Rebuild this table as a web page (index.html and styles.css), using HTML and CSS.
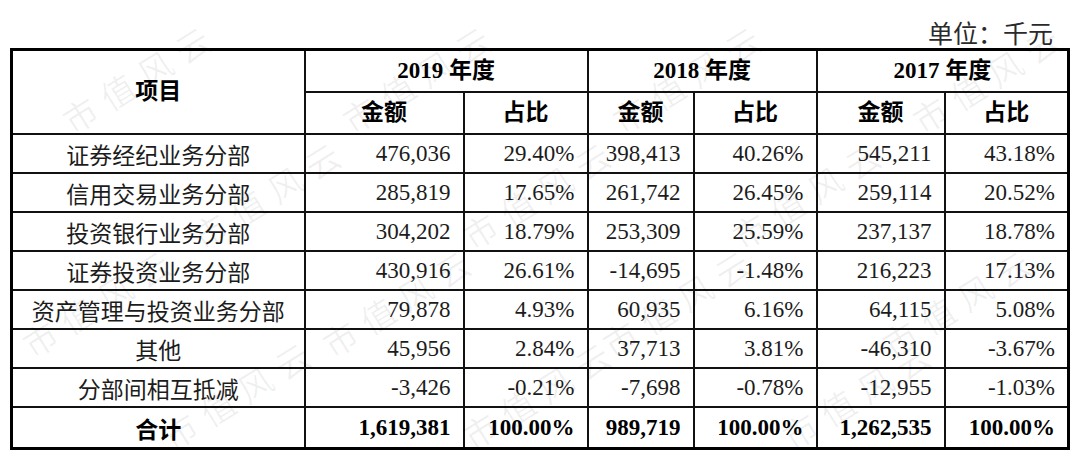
FILE: index.html
```html
<!DOCTYPE html>
<html lang="zh">
<head>
<meta charset="utf-8">
<link rel="stylesheet" href="styles.css">
</head>
<body>
<div class="page">
  <div class="unit">单位：千元</div>
  <table class="tbl">
    <colgroup>
      <col class="c-name"><col class="c-a1"><col class="c-p1"><col class="c-a2"><col class="c-p2"><col class="c-a3"><col class="c-p3">
    </colgroup>
    <thead>
      <tr class="h1">
        <th rowspan="2" class="name-h">项目</th>
        <th colspan="2">2019 年度</th>
        <th colspan="2">2018 年度</th>
        <th colspan="2">2017 年度</th>
      </tr>
      <tr class="h2">
        <th>金额</th><th>占比</th><th>金额</th><th>占比</th><th>金额</th><th>占比</th>
      </tr>
    </thead>
    <tbody>
      <tr><td class="name">证券经纪业务分部</td><td>476,036</td><td>29.40%</td><td>398,413</td><td>40.26%</td><td>545,211</td><td>43.18%</td></tr>
      <tr><td class="name">信用交易业务分部</td><td>285,819</td><td>17.65%</td><td>261,742</td><td>26.45%</td><td>259,114</td><td>20.52%</td></tr>
      <tr><td class="name">投资银行业务分部</td><td>304,202</td><td>18.79%</td><td>253,309</td><td>25.59%</td><td>237,137</td><td>18.78%</td></tr>
      <tr><td class="name">证券投资业务分部</td><td>430,916</td><td>26.61%</td><td>-14,695</td><td>-1.48%</td><td>216,223</td><td>17.13%</td></tr>
      <tr><td class="name">资产管理与投资业务分部</td><td>79,878</td><td>4.93%</td><td>60,935</td><td>6.16%</td><td>64,115</td><td>5.08%</td></tr>
      <tr><td class="name">其他</td><td>45,956</td><td>2.84%</td><td>37,713</td><td>3.81%</td><td>-46,310</td><td>-3.67%</td></tr>
      <tr><td class="name">分部间相互抵减</td><td>-3,426</td><td>-0.21%</td><td>-7,698</td><td>-0.78%</td><td>-12,955</td><td>-1.03%</td></tr>
      <tr class="total"><td class="name">合计</td><td>1,619,381</td><td>100.00%</td><td>989,719</td><td>100.00%</td><td>1,262,535</td><td>100.00%</td></tr>
    </tbody>
  </table>
  <div class="wm" style="left:52px;top:56px">市值风云</div>
  <div class="wm" style="left:332px;top:56px">市值风云</div>
  <div class="wm" style="left:602px;top:56px">市值风云</div>
  <div class="wm" style="left:902px;top:56px">市值风云</div>
  <div class="wm" style="left:182px;top:172px">市值风云</div>
  <div class="wm" style="left:452px;top:172px">市值风云</div>
  <div class="wm" style="left:722px;top:172px">市值风云</div>
  <div class="wm" style="left:12px;top:280px">市值风云</div>
  <div class="wm" style="left:312px;top:280px">市值风云</div>
  <div class="wm" style="left:592px;top:280px">市值风云</div>
  <div class="wm" style="left:872px;top:280px">市值风云</div>
  <div class="wm" style="left:152px;top:372px">市值风云</div>
  <div class="wm" style="left:452px;top:372px">市值风云</div>
  <div class="wm" style="left:772px;top:372px">市值风云</div>
</div>
</body>
</html>
```

FILE: styles.css
```css
html, body {
  margin: 0;
  padding: 0;
  background: #fff;
}
.page {
  position: relative;
  width: 1080px;
  height: 463px;
  overflow: hidden;
  font-family: "Liberation Serif", "Noto Sans CJK SC", serif;
  color: #1c1c1c;
}
.unit {
  height: 31px;
  padding-top: 17px;
  padding-right: 27px;
  text-align: right;
  font-family: "Noto Sans CJK SC", sans-serif;
  font-size: 25px;
  line-height: 30px;
  color: #2a2a2a;
}
.tbl {
  margin-left: 10px;
  width: 1057px;
  table-layout: fixed;
  border-collapse: collapse;
  border: 3px solid #000;
  font-size: 23px;
}
.c-name { width: 293px; }
.c-a1 { width: 159px; }
.c-p1 { width: 124px; }
.c-a2 { width: 106px; }
.c-p2 { width: 123px; }
.c-a3 { width: 128px; }
.c-p3 { width: 124px; }
.tbl th, .tbl td {
  border: 2px solid #111;
  padding: 0 12px 0 0;
  white-space: nowrap;
  line-height: 26px;
}
.tbl th {
  font-weight: bold;
  text-align: center;
  color: #000;
  padding: 0;
  height: 40px;
}
.tbl td {
  text-align: right;
  height: 37px;
}
.tbl td.name {
  text-align: center;
  padding: 0;
  font-family: "Noto Sans CJK SC", sans-serif;
}
.tbl .total td {
  font-weight: bold;
  color: #000;
  height: 39px;
}
.wm {
  position: absolute;
  width: 180px;
  height: 40px;
  line-height: 40px;
  font-family: "Noto Sans CJK SC", sans-serif;
  font-size: 34px;
  letter-spacing: 10px;
  color: rgba(0, 0, 0, 0.06);
  transform: rotate(-32deg);
  transform-origin: center;
  white-space: nowrap;
  pointer-events: none;
}
```
